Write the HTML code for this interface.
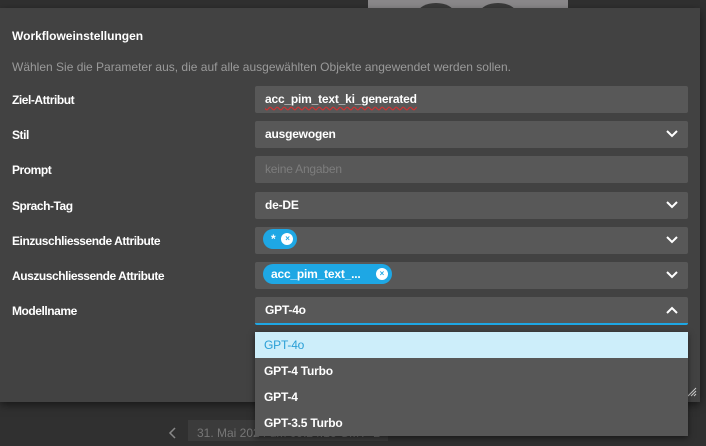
<!DOCTYPE html>
<html><head><meta charset="utf-8"><style>
*{box-sizing:border-box;margin:0;padding:0}
body{width:706px;height:441px;background:#303030;font-family:"Liberation Sans",sans-serif;position:relative;overflow:hidden;font-size:12px;color:#fff}
.img{position:absolute;left:368px;top:0;width:200px;height:10px;background:#8a888a}
.img i{position:absolute;top:3px;width:36px;height:20px;border-radius:50%;background:#3a3a3a}
.dlg{position:absolute;left:0;top:8px;width:700px;height:394px;background:#424242;box-shadow:0 3px 8px rgba(0,0,0,.5)}
.t{position:absolute;left:12px;top:21px;font-weight:bold;font-size:12px}
.s{position:absolute;left:12px;top:52px;color:#9a9a9a;font-size:12px}
.l{position:absolute;left:12px;font-size:12px;font-weight:bold;color:#fff;letter-spacing:-0.45px}
.f{position:absolute;left:255px;width:433px;height:27px;background:#585858;border-radius:2px;padding-left:10px;line-height:27px;font-size:12px;font-weight:bold;letter-spacing:-0.2px}
.ch{position:absolute;right:10px;top:9px}
.chip{display:inline-block;background:#1ea7e4;border-radius:10px;height:20px;line-height:20px;padding:0 4px 0 8px;vertical-align:middle;margin-top:-3px;font-weight:bold}
.chip b{display:inline-block;width:12px;height:12px;border-radius:50%;background:#fff;color:#1ea7e4;font-size:8px;line-height:12px;text-align:center;vertical-align:middle;margin-left:6px;margin-top:-2px}
.dd{position:absolute;left:255px;top:332px;width:433px;height:104px;background:#575757;box-shadow:0 2px 6px rgba(0,0,0,.5)}
.dd div{height:26px;line-height:26px;padding-left:9px;font-weight:bold;font-size:12px;letter-spacing:-0.2px}
.bot{position:absolute;left:188px;top:420px;width:200px;height:21px;background:#3b3b3b;color:#777;line-height:26px;padding-left:9px;font-size:12px}
</style></head><body>
<div class="img"><i style="left:50px"></i><i style="left:112px"></i></div>
<div class="bot">31. Mai 2024 um 09:24:16 GMT+2</div>
<svg style="position:absolute;left:168px;top:427px" width="10" height="12"><path d="M7 1L2 6L7 11" stroke="#888" stroke-width="1.5" fill="none"/></svg>
<div class="dlg">
<div class="t">Workfloweinstellungen</div>
<div class="s">Wählen Sie die Parameter aus, die auf alle ausgewählten Objekte angewendet werden sollen.</div>
<div class="l" style="top:85px">Ziel-Attribut</div>
<div class="f" style="top:78px"><span style="text-decoration:underline wavy #c33;text-underline-offset:3px">acc_pim_text_ki_generated</span></div>
<div class="l" style="top:120px">Stil</div>
<div class="f" style="top:113px">ausgewogen<svg class="ch" width="12" height="8"><path d="M1 1L6 6L11 1" stroke="#fff" stroke-width="2" fill="none"/></svg></div>
<div class="l" style="top:155px">Prompt</div>
<div class="f" style="top:148px;color:#7d7d7d;font-weight:normal">keine Angaben</div>
<div class="l" style="top:191px">Sprach-Tag</div>
<div class="f" style="top:184px">de-DE<svg class="ch" width="12" height="8"><path d="M1 1L6 6L11 1" stroke="#fff" stroke-width="2" fill="none"/></svg></div>
<div class="l" style="top:226px">Einzuschliessende Attribute</div>
<div class="f" style="top:219px;padding-left:8px"><span class="chip">*<b>×</b></span><svg class="ch" width="12" height="8"><path d="M1 1L6 6L11 1" stroke="#fff" stroke-width="2" fill="none"/></svg></div>
<div class="l" style="top:261px">Auszuschliessende Attribute</div>
<div class="f" style="top:254px;padding-left:8px"><span class="chip">acc_pim_text_...&nbsp;&nbsp;&nbsp;<b>×</b></span><svg class="ch" width="12" height="8"><path d="M1 1L6 6L11 1" stroke="#fff" stroke-width="2" fill="none"/></svg></div>
<div class="l" style="top:296px">Modellname</div>
<div class="f" style="top:289px;border-bottom:2px solid #1ea7e4;height:28px">GPT-4o<svg class="ch" width="12" height="8"><path d="M1 7L6 2L11 7" stroke="#fff" stroke-width="2" fill="none"/></svg></div>
<svg style="position:absolute;left:687px;top:379px" width="10" height="10"><path d="M1 9L9 1M4 9L9 4M7 9L9 7" stroke="#ccc" stroke-width="1"/></svg>
</div>
<div class="dd">
<div style="background:#cdeefa;color:#2a9fd6;font-weight:normal">GPT-4o</div>
<div>GPT-4 Turbo</div>
<div>GPT-4</div>
<div>GPT-3.5 Turbo</div>
</div>
</body></html>
